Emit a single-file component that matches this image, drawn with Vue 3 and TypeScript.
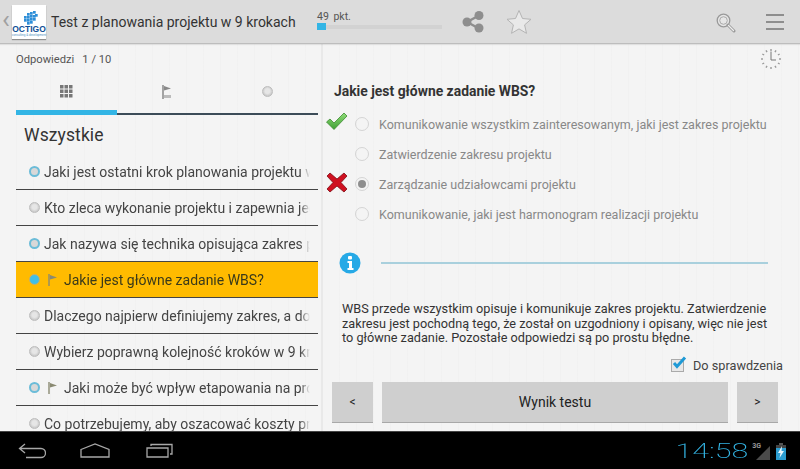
<script setup lang="ts">
interface Row { text: string; state: 'done' | 'none' | 'active'; flag?: boolean }
const rows: Row[] = [
  { text: 'Jaki jest ostatni krok planowania projektu w 9 krokach?', state: 'done' },
  { text: 'Kto zleca wykonanie projektu i zapewnia jego finansowanie?', state: 'none' },
  { text: 'Jak nazywa się technika opisująca zakres projektu?', state: 'done' },
  { text: 'Jakie jest główne zadanie WBS?', state: 'active', flag: true },
  { text: 'Dlaczego najpierw definiujemy zakres, a dopiero potem czas?', state: 'none' },
  { text: 'Wybierz poprawną kolejność kroków w 9 krokach', state: 'none' },
  { text: 'Jaki może być wpływ etapowania na projekt?', state: 'done', flag: true },
  { text: 'Co potrzebujemy, aby oszacować koszty projektu?', state: 'none' },
]
const options = [
  { text: 'Komunikowanie wszystkim zainteresowanym, jaki jest zakres projektu', mark: 'ok' },
  { text: 'Zatwierdzenie zakresu projektu', mark: '' },
  { text: 'Zarządzanie udziałowcami projektu', mark: 'bad', on: true },
  { text: 'Komunikowanie, jaki jest harmonogram realizacji projektu', mark: '' },
]
const ticks = Array.from({ length: 12 }, (_, i) => i * 30)
const dots = Array.from({ length: 9 }, (_, i) => ({ x: 1 + (i % 3) * 4.5, y: 1 + Math.floor(i / 3) * 4.5 }))
const cubes = [
  [9, 2], [12, 1], [15, 0], [17, 3],
  [6, 5], [9, 5], [12, 4], [15, 4],
  [6, 8], [9, 8], [12, 7], [15, 7],
  [9, 11], [12, 10],
]
</script>

<template>
  <div class="app">
    <header class="top">
      <span class="chev">‹</span>
      <div class="logo">
        <svg width="22" height="14" viewBox="0 0 22 14" class="logo-mark">
          <rect v-for="(c, i) in cubes" :key="i" :x="c[0]" :y="c[1]" width="2.700" height="2.700" fill="#2f8fd8" />
        </svg>
        <span class="logo-name">OCTIGO</span>
        <span class="logo-sub">consulting &amp; development</span>
      </div>
      <h1 class="title">Test z planowania projektu w 9 krokach</h1>
      <div class="score">
        <span class="pts">49 <i>pkt.</i></span>
        <div class="bar"><div class="fill" :style="{ width: '9px' }"></div></div>
      </div>
      <svg class="share" width="22" height="22" viewBox="0 0 22 22">
        <path d="M5 11L17 4.500M5 11l12 6.500" stroke="#8e8e8e" stroke-width="2.500" />
        <circle cx="5" cy="11" r="4.500" fill="#8e8e8e" />
        <circle cx="17" cy="4.500" r="4.500" fill="#8e8e8e" />
        <circle cx="17" cy="17" r="4.500" fill="#8e8e8e" />
      </svg>
      <svg class="star" width="26" height="26" viewBox="0 0 26 26">
        <path d="M13 1.500l3.500 8 8.500.8-6.400 5.600 1.900 8.400-7.500-4.400-7.500 4.400 1.900-8.400L1 10.300l8.500-.8z" fill="#e9e9e9" stroke="#b4b4b4" stroke-width="1" />
      </svg>
      <div class="spacer"></div>
      <svg class="search" width="20" height="20" viewBox="0 0 20 20">
        <circle cx="7.500" cy="7.500" r="6.300" fill="#e6e6e6" stroke="#999" stroke-width="1.300" />
        <circle cx="7.500" cy="7.500" r="3.800" fill="none" stroke="#aaa" stroke-width="1" />
        <path d="M12 12l6 6" stroke="#999" stroke-width="3" stroke-linecap="round" />
        <path d="M12.500 12.500l5 5" stroke="#eee" stroke-width="1.300" stroke-linecap="round" />
      </svg>
      <div class="burger"><span></span><span></span><span></span></div>
    </header>

    <main class="main">
      <section class="left">
        <div class="count"><span>Odpowiedzi</span><span>1 / 10</span></div>
        <div class="tabs">
          <div class="tab on">
            <svg width="13" height="13" viewBox="0 0 13 13">
              <rect v-for="(d, i) in dots" :key="i" :x="d.x - 1" :y="d.y - 1" width="3.500" height="3.500" fill="#777" />
            </svg>
          </div>
          <div class="tab">
            <svg width="10" height="14" viewBox="0 0 10 14"><path d="M1 0v14" stroke="#888" stroke-width="1.500" /><path d="M2 1l7 2.500-7 2z" fill="#888" /><path d="M2 10h7v3H2z" fill="#bbb" /></svg>
          </div>
          <div class="tab"><span class="dot none"></span></div>
        </div>
        <h2 class="all">Wszystkie</h2>
        <ul class="list">
          <li v-for="r in rows" :key="r.text" class="row" :class="{ current: r.state === 'active' }">
            <span class="dot" :class="r.state"></span>
            <svg v-if="r.flag" class="rflag" width="10" height="12" viewBox="0 0 10 12"><path d="M1 0v12" stroke="#8a8a72" stroke-width="1.400" /><path d="M2 1l7 2.500-7 2z" fill="#8a8a72" /></svg>
            <span class="rtext">{{ r.text }}</span>
          </li>
        </ul>
      </section>

      <section class="right">
        <div class="clock-line">
          <svg width="22" height="22" viewBox="0 0 22 22">
            <rect v-for="t in ticks" :key="t" x="10.300" y="1" width="1.400" height="2" fill="#999" :transform="`rotate(${t} 11 11)`" />
            <path d="M11 3.500V12h5" stroke="#777" stroke-width="1" fill="none" />
          </svg>
        </div>
        <h3 class="q">Jakie jest główne zadanie WBS?</h3>
        <div class="opts">
          <div v-for="o in options" :key="o.text" class="opt">
            <span class="mark">
              <svg v-if="o.mark === 'ok'" class="m-ok" width="23" height="19" viewBox="0 0 23 19">
                <defs><linearGradient id="okg" x1="0" y1="0" x2="0" y2="1"><stop offset="0" stop-color="#8fdc78" /><stop offset="1" stop-color="#3f9f34" /></linearGradient></defs>
                <path d="M1.500 10l3.500-3 4 4L19 1l3 3-13 13.500z" fill="url(#okg)" stroke="#3c8a30" stroke-width=".8" />
              </svg>
              <svg v-if="o.mark === 'bad'" class="m-bad" width="22" height="21" viewBox="0 0 22 21"><path d="M1 4l3-3 7 6 7-6 3 3-6 6.500 6 6.500-3 3-7-6-7 6-3-3 6-6.500z" fill="#cf1020" stroke="#7d0c14" stroke-width=".8" /></svg>
            </span>
            <span class="radio" :class="{ on: o.on }"></span>
            <span class="otext">{{ o.text }}</span>
          </div>
        </div>
        <div class="info">
          <svg width="22" height="22" viewBox="0 0 22 22">
            <circle cx="11" cy="11" r="10.500" fill="#26a9e6" />
            <rect x="9" y="4" width="4" height="3.500" rx="1" fill="#fff" />
            <path d="M8.500 9h4.500v7h1.500v2h-6v-2H10v-5H8.500z" fill="#fff" />
          </svg>
          <div class="rule"></div>
        </div>
        <p class="expl">WBS przede wszystkim opisuje i komunikuje zakres projektu. Zatwierdzenie zakresu jest pochodną tego, że został on uzgodniony i opisany, więc nie jest to główne zadanie. Pozostałe odpowiedzi są po prostu błędne.</p>
        <div class="check">
          <span class="box">
            <svg width="18" height="16" viewBox="0 0 18 16"><path d="M4 7l3 3.500L15 1.500" stroke="#1f9ad6" stroke-width="3" fill="none" /></svg>
          </span>
          <span>Do sprawdzenia</span>
        </div>
        <div class="btns">
          <button class="btn small">&lt;</button>
          <button class="btn wide">Wynik testu</button>
          <button class="btn small">&gt;</button>
        </div>
      </section>
    </main>

    <footer class="nav">
      <svg class="n-back" width="28" height="16" viewBox="0 0 28 16"><path d="M7 1L1.500 5.500 7 10M2 5.500h21a3.500 3.500 0 0 1 0 9H8" stroke="#a8a8a8" stroke-width="1.300" fill="none" /></svg>
      <svg class="n-home" width="30" height="15" viewBox="0 0 30 15"><path d="M1 6.500L15 1l14 5.500V14H1z" stroke="#a8a8a8" stroke-width="1.300" fill="none" /></svg>
      <svg class="n-rec" width="28" height="15" viewBox="0 0 28 15"><path d="M1 5h21v9H1z" stroke="#a8a8a8" stroke-width="1.300" fill="none" /><path d="M5 3V1.500h21V11h-2" stroke="#a8a8a8" stroke-width="1.300" fill="none" /></svg>
      <div class="spacer"></div>
      <span class="time">14:58</span>
      <span class="g3">3G</span>
      <svg width="14" height="14" viewBox="0 0 14 14" class="signal"><path d="M14 0v14H0z" fill="#4a4a4a" /></svg>
      <svg width="12" height="17" viewBox="0 0 12 17" class="batt"><path d="M4 0h4v2H4z" fill="#555" /><path d="M1 2h10v3H1z" fill="#444" /><path d="M1 5h10v12H1z" fill="#2b9ccf" /><path d="M7 3L3 10h2.500L4.500 15 9 8H6.500z" fill="#eaf6fb" /></svg>
    </footer>
  </div>
</template>

<style scoped>
.app {
  width: 800px;
  height: 469px;
  display: flex;
  flex-direction: column;
  overflow: hidden;
  font-family: Roboto, "Noto Sans", sans-serif;
  background-color: #f4f4f4;
  background-image: repeating-linear-gradient(90deg, rgba(0,0,0,0) 0 16px, rgba(0,0,0,.012) 16px 17px);
  color: #333;
}
.top {
  height: 44px;
  flex: none;
  box-sizing: border-box;
  display: flex;
  align-items: center;
  background: #dcdcdc;
  border-bottom: 1px solid #bdbdbd;
  box-shadow: 0 1px 1px rgba(0,0,0,.08);
  position: relative;
  z-index: 1;
}
.chev { width: 12px; padding-left: 2px; box-sizing: border-box; font-size: 26px; line-height: 26px; color: #a0a0a0; margin-top: -5px; }
.logo {
  width: 34px;
  height: 34px;
  margin-top: 1px;
  background: #fff;
  box-shadow: 0 1px 1px rgba(0,0,0,.35);
  display: flex;
  flex-direction: column;
  align-items: center;
  flex: none;
}
.logo-mark { margin-top: 6px; }
.logo-name { font: 700 8.500px/8px "Liberation Sans", sans-serif; color: #0e4f96; letter-spacing: 0; }
.logo-sub { font: 400 3px/3px "Liberation Sans", sans-serif; color: #4b8fc0; white-space: nowrap; margin-top: 1px; }
.title { margin: 0 0 0 5px; font-size: 14px; font-weight: 400; color: #333; width: 266px; white-space: nowrap; }
.score { width: 125px; margin-top: -3px; display: flex; flex-direction: column; }
.pts { font-size: 10.500px; line-height: 12px; color: #555; }
.pts i { font-style: normal; margin-left: 2px; }
.bar { height: 4px; margin-top: 2px; background: #d2d2d2; position: relative; }
.fill { position: absolute; left: 0; top: -2px; height: 7px; background: #33b5e5; }
.share { margin-left: 20px; }
.star { margin-left: 22px; }
.spacer { flex: 1; }
.search { margin-right: 30px; margin-top: 3px; }
.burger { width: 18px; margin-right: 16px; display: flex; flex-direction: column; gap: 5px; }
.burger span { height: 2px; background: #8e8e8e; }

.main { flex: 1; min-height: 0; display: flex; }
.left {
  width: 323px;
  flex: none;
  box-sizing: border-box;
  padding: 0 3px 0 16px;
  border-right: 2px solid #e9e9e9;
  overflow: hidden;
  display: flex;
  flex-direction: column;
}
.left > * { flex: none; }
.count { display: flex; gap: 8px; font-size: 11.200px; line-height: 14px; color: #555; height: 14px; margin-top: 9px; }
.tabs { display: flex; margin-top: 8px; height: 40px; border-bottom: 2px solid #3c4c58; box-sizing: border-box; }
.tab { flex: 1; box-sizing: border-box; display: flex; align-items: center; justify-content: center; padding-bottom: 5px; }
.tab.on { margin-bottom: -2px; border-bottom: 5px solid #33b5e5; padding-bottom: 2px; }
.all { margin: 10px 0 0 8px; font-size: 17.500px; line-height: 21px; font-weight: 400; color: #333; height: 29px; letter-spacing: .1px; }
.list { list-style: none; margin: 0; padding: 0; }
.row {
  height: 36px;
  box-sizing: border-box;
  border-bottom: 1px solid #444;
  display: flex;
  align-items: center;
  padding-left: 13px;
  padding-right: 8px;
  font-size: 14px;
  white-space: nowrap;
  overflow: hidden;
  color: #444;
}
.row.current { background: #ffbb00; border-top: 1px solid #444; margin-top: -1px; height: 37px; color: #3a3a1a; }
.rtext { flex: 1; min-width: 0; overflow: hidden; margin-left: 4px; -webkit-mask-image: linear-gradient(90deg, #000 calc(100% - 10px), transparent); mask-image: linear-gradient(90deg, #000 calc(100% - 10px), transparent); }
.dot { width: 11px; height: 11px; flex: none; box-sizing: border-box; border-radius: 50%; }
.dot.none { background: radial-gradient(circle at 50% 45%, #e6e6e6 0 35%, #cbcbcb 70%, #adadad 100%); border: 1px solid #bdbdbd; }
.dot.done { background: #d8d8d8; border: 2px solid #6bbcd8; }
.dot.active { background: #40bfe8; border: 1px solid #c8b06a; }
.rflag { margin-left: 8px; margin-right: 2px; }

.right { flex: 1; min-width: 0; display: flex; flex-direction: column; padding: 0 22px 0 9px; }
.right > * { flex: none; }
.clock-line { height: 30px; display: flex; justify-content: flex-end; padding: 4px 0 0; box-sizing: border-box; margin-right: -4px; }
.q { margin: 9px 0 0 2px; font-size: 13.900px; line-height: 16px; font-weight: 700; color: #333; height: 16px; }
.opts { margin-top: 10px; }
.opt { height: 30px; display: flex; align-items: center; }
.mark { width: 23px; flex: none; display: flex; }
.m-ok { margin: -6px 0 0 -7px; }
.m-bad { margin: -3px 0 0 -6px; }
.radio { width: 14px; height: 14px; flex: none; box-sizing: border-box; border: 1px solid #d4d4d4; border-radius: 50%; display: flex; align-items: center; justify-content: center; }
.radio.on::after { content: ""; width: 8px; height: 8px; border-radius: 50%; background: #8e8e8e; }
.otext { margin-left: 10px; font-size: 12.500px; color: #888; white-space: nowrap; }
.info { display: flex; align-items: center; margin-top: 23px; height: 22px; padding-left: 7px; margin-right: -12px; }
.rule { flex: 1; height: 2px; background: #a9d0dd; margin-left: 20px; margin-right: 22px; }
.expl { margin: 28px 0 0 10px; font-size: 12.700px; line-height: 14.500px; color: #333; width: 430px; }
.check { display: flex; align-items: center; justify-content: flex-end; font-size: 12.700px; color: #444; margin: 12px -5px 0 0; height: 16px; }
.box { width: 13px; height: 13px; box-sizing: border-box; background: #e8e8e8; border: 1px solid #aaa; margin-right: 9px; position: relative; }
.box svg { position: absolute; left: -2px; top: -4px; }
.btns { display: flex; gap: 9px; margin-top: 8px; }
.btn { height: 41px; border: 0; border-bottom: 1px solid #a8a8a8; background: #cfcfcf; font-family: inherit; font-size: 14px; color: #222; padding: 0; }
.btn.small { width: 41px; font-size: 12px; }
.btn.wide { flex: 1; }

.nav { height: 38px; flex: none; background: #000; display: flex; align-items: center; border-top: 1px solid #444; box-sizing: border-box; position: relative; }
.n-back { margin-left: 18px; margin-top: 1px; }
.n-home { margin-left: 34px; margin-top: -1px; }
.n-rec { margin-left: 36px; margin-top: -1px; }
.time { font-family: Roboto, sans-serif; font-weight: 200; font-size: 21px; letter-spacing: 0; color: #33b5e5; transform: scaleX(1.45); transform-origin: right center; }
.g3 { font-size: 7px; font-weight: 700; color: #999; align-self: flex-start; margin: 10px 0 0 4px; }
.signal { margin: 5px 0 0 -5px; }
.batt { margin: 1px 13px 0 5px; }
</style>
